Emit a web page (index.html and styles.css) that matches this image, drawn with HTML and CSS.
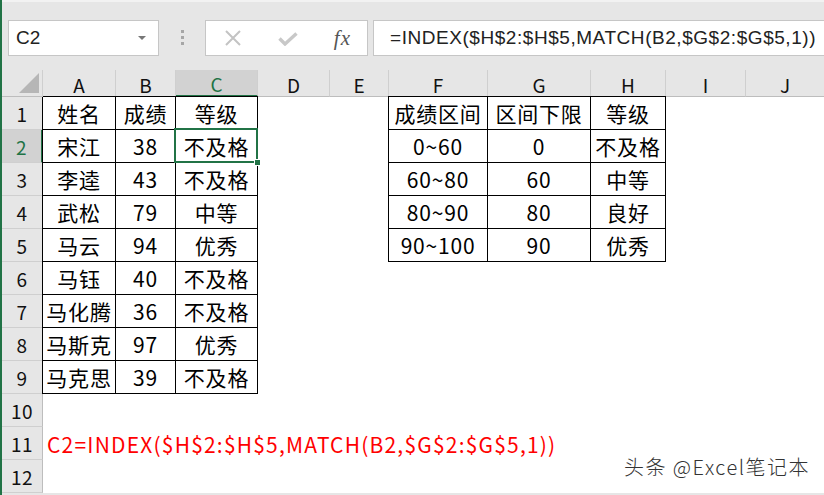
FILE: index.html
```html
<!DOCTYPE html>
<html lang="zh-CN">
<head>
    <meta charset="UTF-8">
    <meta name="viewport" content="width=device-width, initial-scale=1.0">
    <title>INDEX + MATCH 成绩等级</title>
    <link rel="stylesheet" href="styles.css">
</head>
<body>
    <div class="app">
        <!-- Formula bar -->
        <div class="formula-bar">
            <div class="name-box">
                <span>C2</span>
                <span class="caret"></span>
            </div>
            <div class="grip"><i></i><i></i><i></i></div>
            <div class="fx-box">
                <svg class="icon-x" width="18" height="16" viewBox="0 0 18 16">
                    <path d="M2 1 L16 15 M16 1 L2 15" stroke="#c3c3c3" stroke-width="2" fill="none"/>
                </svg>
                <svg class="icon-ok" width="20" height="14" viewBox="0 0 20 14">
                    <path d="M1.5 6.5 L7 12 L18.5 1.5" stroke="#c8c8c8" stroke-width="3.4" fill="none"/>
                </svg>
                <span class="fx">fx</span>
            </div>
            <div class="formula-input">=INDEX($H$2:$H$5,MATCH(B2,$G$2:$G$5,1))</div>
        </div>

        <!-- Worksheet -->
        <div class="sheet">
            <div class="corner"></div>
            <div class="col-head">A</div>
            <div class="col-head">B</div>
            <div class="col-head sel">C</div>
            <div class="col-head">D</div>
            <div class="col-head">E</div>
            <div class="col-head">F</div>
            <div class="col-head">G</div>
            <div class="col-head">H</div>
            <div class="col-head">I</div>
            <div class="col-head last">J</div>

            <div class="row-head">1</div>
            <div class="cell t t-corner">姓名</div>
            <div class="cell t t-top">成绩</div>
            <div class="cell t t-top">等级</div>
            <div class="cell"></div>
            <div class="cell"></div>
            <div class="cell t t-corner">成绩区间</div>
            <div class="cell t t-top">区间下限</div>
            <div class="cell t t-top">等级</div>
            <div class="cell"></div>
            <div class="cell"></div>

            <div class="row-head sel">2</div>
            <div class="cell t t-left">宋江</div>
            <div class="cell t">38</div>
            <div class="cell t active">不及格</div>
            <div class="cell"></div>
            <div class="cell"></div>
            <div class="cell t t-left">0~60</div>
            <div class="cell t">0</div>
            <div class="cell t">不及格</div>
            <div class="cell"></div>
            <div class="cell"></div>

            <div class="row-head">3</div>
            <div class="cell t t-left">李逵</div>
            <div class="cell t">43</div>
            <div class="cell t">不及格</div>
            <div class="cell"></div>
            <div class="cell"></div>
            <div class="cell t t-left">60~80</div>
            <div class="cell t">60</div>
            <div class="cell t">中等</div>
            <div class="cell"></div>
            <div class="cell"></div>

            <div class="row-head">4</div>
            <div class="cell t t-left">武松</div>
            <div class="cell t">79</div>
            <div class="cell t">中等</div>
            <div class="cell"></div>
            <div class="cell"></div>
            <div class="cell t t-left">80~90</div>
            <div class="cell t">80</div>
            <div class="cell t">良好</div>
            <div class="cell"></div>
            <div class="cell"></div>

            <div class="row-head">5</div>
            <div class="cell t t-left">马云</div>
            <div class="cell t">94</div>
            <div class="cell t">优秀</div>
            <div class="cell"></div>
            <div class="cell"></div>
            <div class="cell t t-left">90~100</div>
            <div class="cell t">90</div>
            <div class="cell t">优秀</div>
            <div class="cell"></div>
            <div class="cell"></div>

            <div class="row-head">6</div>
            <div class="cell t t-left">马钰</div>
            <div class="cell t">40</div>
            <div class="cell t">不及格</div>
            <div class="cell span-rest"></div>

            <div class="row-head">7</div>
            <div class="cell t t-left">马化腾</div>
            <div class="cell t">36</div>
            <div class="cell t">不及格</div>
            <div class="cell span-rest"></div>

            <div class="row-head">8</div>
            <div class="cell t t-left">马斯克</div>
            <div class="cell t">97</div>
            <div class="cell t">优秀</div>
            <div class="cell span-rest"></div>

            <div class="row-head">9</div>
            <div class="cell t t-left">马克思</div>
            <div class="cell t">39</div>
            <div class="cell t">不及格</div>
            <div class="cell span-rest"></div>

            <div class="row-head">10</div>
            <div class="cell span-all"></div>

            <div class="row-head">11</div>
            <div class="cell span-all note">C2=INDEX($H$2:$H$5,MATCH(B2,$G$2:$G$5,1))</div>

            <div class="row-head">12</div>
            <div class="cell span-all"></div>
        </div>

        <div class="watermark">头条 @Excel笔记本</div>
    </div>
</body>
</html>
```

FILE: styles.css
```css
body {
    margin: 0;
    font-family: "Noto Sans CJK SC", "Noto Sans", sans-serif;
    background-color: #fff;
    overflow: hidden;
}
.app {
    position: relative;
    height: 495px;
    border-left: 2px solid #217346;
    background-color: #e6e6e6;
}

/* Formula bar */
.formula-bar {
    display: flex;
    height: 70px;
    box-sizing: border-box;
    padding: 18px 0 16px 6px;
    border-top: 2px solid #f2f2f2;
}
.name-box,
.fx-box,
.formula-input {
    height: 36px;
    box-sizing: border-box;
    background-color: #fff;
    border: 1px solid #c6c6c6;
    display: flex;
    align-items: center;
}
.name-box {
    width: 151px;
    padding: 0 12px 0 7px;
    justify-content: space-between;
    font-family: "Liberation Sans", Arial, sans-serif;
    font-size: 19px;
    color: #222;
}
.caret {
    width: 0;
    height: 0;
    border-left: 4px solid transparent;
    border-right: 4px solid transparent;
    border-top: 4px solid #777;
}
.grip {
    width: 46px;
    display: flex;
    flex-direction: column;
    align-items: center;
    justify-content: center;
    gap: 3px;
}
.grip i {
    display: block;
    width: 3px;
    height: 3px;
    background-color: #a6a6a6;
}
.fx-box {
    width: 163px;
    margin-right: 5px;
    padding: 0 16px 0 18px;
    justify-content: space-between;
}
.icon-ok {
    margin-top: 2px;
}
.fx {
    font-family: "Liberation Serif", "Times New Roman", serif;
    font-style: italic;
    font-size: 21px;
    color: #555;
    letter-spacing: 1px;
}
.formula-input {
    flex: 1;
    border-right: none;
    padding-left: 16px;
    font-family: "Liberation Sans", Arial, sans-serif;
    font-size: 19px;
    letter-spacing: 0.55px;
    color: #222;
    white-space: nowrap;
    overflow: hidden;
}

/* Worksheet grid */
.sheet {
    display: grid;
    grid-template-columns: 41px 73px 60px 82px 72px 59px 99px 103px 75px 80px 1fr;
    grid-template-rows: 27px repeat(12, 33px);
    background-color: #fff;
}
.corner {
    position: relative;
    background-color: #e6e6e6;
    border-right: 1px solid #cfcfcf;
    border-bottom: 1px solid #bdbdbd;
}
.corner::after {
    content: "";
    position: absolute;
    right: 3px;
    bottom: 3px;
    width: 0;
    height: 0;
    border-left: 20px solid transparent;
    border-bottom: 20px solid #b6b6b6;
}
.col-head,
.row-head {
    display: flex;
    align-items: center;
    justify-content: center;
    background-color: #e6e6e6;
    font-size: 19px;
    color: #111;
}
.col-head {
    border-right: 1px solid #cfcfcf;
    border-bottom: 1px solid #bdbdbd;
    padding-top: 2px;
}
.col-head.last {
    border-right: none;
}
.row-head {
    border-right: 1px solid #bdbdbd;
    border-bottom: 1px solid #cfcfcf;
    letter-spacing: 0.5px;
}
.col-head.sel {
    background-color: #d2d2d2;
    color: #217346;
    border-bottom: 2px solid #217346;
}
.row-head.sel {
    background-color: #d2d2d2;
    color: #217346;
    border-right: 2px solid #217346;
}
.cell {
    display: flex;
    align-items: center;
    justify-content: center;
    box-sizing: border-box;
    font-size: 21px;
    letter-spacing: 0.8px;
    color: #000;
    white-space: nowrap;
}
.t {
    border-right: 1px solid #000;
    border-bottom: 1px solid #000;
}
.t-left {
    box-shadow: -1px 0 0 #000;
}
.t-top {
    box-shadow: 0 -1px 0 #000;
}
.t-corner {
    box-shadow: -1px 0 0 #000, 0 -1px 0 #000, -1px -1px 0 #000;
}
.span-rest {
    grid-column: 5 / -1;
}
.span-all {
    grid-column: 2 / -1;
}
.note {
    justify-content: flex-start;
    padding-left: 4px;
    color: #ff0000;
    letter-spacing: 1.2px;
}

/* Active cell C2 */
.active {
    position: relative;
}
.active::after {
    content: "";
    position: absolute;
    left: -2px;
    top: -2px;
    right: -1px;
    bottom: -1px;
    border: 2px solid #217346;
}
.active::before {
    content: "";
    position: absolute;
    right: -4px;
    bottom: -4px;
    width: 5px;
    height: 5px;
    background-color: #217346;
    border: 1px solid #fff;
    z-index: 1;
}

/* Watermark over the sheet */
.watermark {
    position: absolute;
    right: 14px;
    bottom: 14px;
    font-size: 20px;
    font-weight: 300;
    color: #333;
    letter-spacing: 1.5px;
    text-shadow: 0 0 2px #fff, 0 0 2px #fff;
}
```
